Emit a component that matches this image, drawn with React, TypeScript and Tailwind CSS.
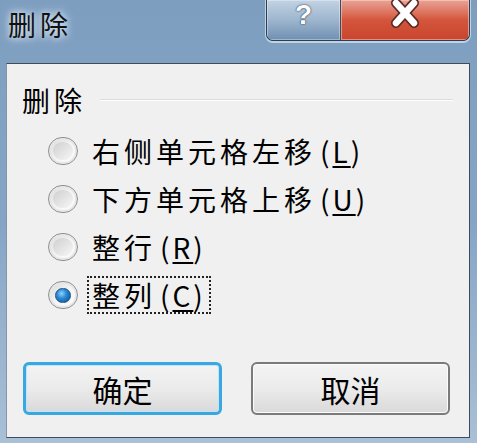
import { ReactNode } from 'react'

const cjk = "font-['Noto_Sans_CJK_SC','Noto_Sans',sans-serif]"

function Radio({ checked }: { checked?: boolean }) {
  return (
    <div className="w-[30px] h-[28px] rounded-full border border-[#8d9196] bg-gradient-to-br from-[#d9d9d9] via-[#f4f4f4] to-[#ffffff] flex items-center justify-center shadow-[inset_0_0_0_2px_#e6e6e6]">
      {checked ? (
        <div className="w-[16px] h-[15px] rounded-full bg-[radial-gradient(circle_at_40%_35%,#8fd3ff_0%,#2a8ad6_40%,#0b4d8e_100%)] border border-[#1b4f7e]" />
      ) : (
        <div className="w-[20px] h-[18px] rounded-full bg-gradient-to-br from-[#cfcfcf] to-[#f7f7f7]" />
      )}
    </div>
  )
}

function Option({ label, hotkey, checked, focused }: { label: string; hotkey: string; checked?: boolean; focused?: boolean }) {
  return (
    <div className="h-[48px] flex items-center">
      <Radio checked={checked} />
      <div
        className={
          'ml-[9px] px-[3px] h-[38px] flex items-center text-[28px] leading-none tracking-[4px] text-black ' +
          (focused ? 'border-2 border-dotted border-[#222]' : 'border-2 border-transparent')
        }
      >
        {label}
        <span className="ml-[4px] tracking-[3px]">
          {'('}<u className="underline-offset-[3px]">{hotkey}</u>{')'}
        </span>
      </div>
    </div>
  )
}

function Button({ children, primary }: { children: ReactNode; primary?: boolean }) {
  return (
    <button
      className={
        'w-[199px] h-[53px] rounded-[6px] flex items-center justify-center text-[30px] leading-none text-black bg-gradient-to-b from-[#f3f3f3] via-[#ebebeb] to-[#d9d9d9] ' +
        (primary
          ? 'border-[3px] border-[#3aa7df] shadow-[inset_0_0_0_1px_#bfe6fa]'
          : 'border-2 border-[#7a7a7a] shadow-[inset_0_0_0_1px_#fbfbfb]')
      }
    >
      {children}
    </button>
  )
}

export default function App() {
  return (
    <div className={'w-[477px] h-[443px] overflow-hidden flex flex-col bg-gradient-to-b from-[#7e9ec0] via-[#86a5c6] to-[#a9c0d6] ' + cjk}>
      {/* title bar */}
      <div className="h-[63px] flex items-start justify-between shrink-0">
        <div className="pl-[8px] pt-[10px] text-[28px] leading-none tracking-[4px] text-[#111] [text-shadow:0_0_10px_#d8e6f3,0_0_6px_#d8e6f3]">
          删除
        </div>
        <div className="mr-[7px] flex h-[41px] rounded-b-[7px] border border-t-0 border-[#2d3e52] shadow-[0_1px_0_1px_rgba(220,232,244,0.7)] overflow-hidden">
          <div className="w-[74px] flex items-start justify-center pt-[1px] bg-gradient-to-b from-[#c3d3e4] via-[#9db5ce] to-[#6f90b2] border-r border-[#3a4b5e] shadow-[inset_0_0_0_1px_rgba(255,255,255,0.35)]">
            <span className="text-[28px] leading-[28px] font-bold text-white font-['Liberation_Sans',sans-serif] [text-shadow:0_0_2px_#2c3d50,0_0_1px_#2c3d50]">?</span>
          </div>
          <div className="w-[128px] flex items-start justify-center bg-gradient-to-b from-[#e8a395] via-[#d4553c] to-[#c8452d] shadow-[inset_0_0_0_1px_rgba(255,220,210,0.5)]">
            <svg width="34" height="28" viewBox="0 0 34 28">
              <path d="M8 3 L26 23 M26 3 L8 23" stroke="#5b2a24" strokeWidth="10" strokeLinecap="round" />
              <path d="M8 3 L26 23 M26 3 L8 23" stroke="#ffffff" strokeWidth="6.5" strokeLinecap="round" />
            </svg>
          </div>
        </div>
      </div>

      {/* client area */}
      <div className="ml-[6px] mr-[7px] h-[375px] shrink-0 bg-[#f0f0f0] border border-[#3d4b5a] border-l-[#8595a6] flex flex-col">
        <div className="flex items-center pl-[15px] pr-[16px] pt-[20px] h-[51px]">
          <span className="text-[28px] leading-none tracking-[4px] text-black">删除</span>
          <div className="flex-1 ml-[14px] h-[2px] border-t border-[#d6dde3] border-b border-b-white" />
        </div>
        <div className="pl-[41px] mt-[12px] flex flex-col">
          <Option label="右侧单元格左移" hotkey="L" />
          <Option label="下方单元格上移" hotkey="U" />
          <Option label="整行" hotkey="R" />
          <Option label="整列" hotkey="C" checked focused />
        </div>
        <div className="flex pl-[16px] mt-[43px] gap-[29px]">
          <Button primary>确定</Button>
          <Button>取消</Button>
        </div>
      </div>
    </div>
  )
}
